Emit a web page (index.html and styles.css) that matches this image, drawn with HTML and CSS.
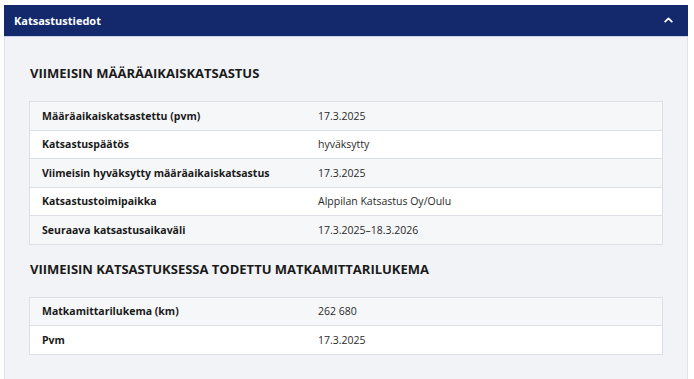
FILE: index.html
```html
<!DOCTYPE html>
<html lang="fi">
<head>
<meta charset="utf-8">
<title>Katsastustiedot</title>
<link rel="stylesheet" href="styles.css">
</head>
<body>
<section class="panel">
  <header class="panel-header">
    <h2 class="panel-title">Katsastustiedot</h2>
    <svg class="chevron" width="9" height="6" viewBox="0 0 9 6" aria-hidden="true"><path d="M1.2 4.6 L4.5 1.4 L7.8 4.6" fill="none" stroke="#ffffff" stroke-width="1.8" stroke-linecap="round" stroke-linejoin="round"/></svg>
  </header>
  <div class="panel-body">
    <h3 class="section-title">VIIMEISIN MÄÄRÄAIKAISKATSASTUS</h3>
    <div class="info-table">
      <div class="row odd"><div class="label">Määräaikaiskatsastettu (pvm)</div><div class="value">17.3.2025</div></div>
      <div class="row"><div class="label">Katsastuspäätös</div><div class="value">hyväksytty</div></div>
      <div class="row odd"><div class="label">Viimeisin hyväksytty määräaikaiskatsastus</div><div class="value">17.3.2025</div></div>
      <div class="row"><div class="label">Katsastustoimipaikka</div><div class="value">Alppilan Katsastus Oy/Oulu</div></div>
      <div class="row odd"><div class="label">Seuraava katsastusaikaväli</div><div class="value">17.3.2025–18.3.2026</div></div>
    </div>
    <h3 class="section-title">VIIMEISIN KATSASTUKSESSA TODETTU MATKAMITTARILUKEMA</h3>
    <div class="info-table">
      <div class="row odd"><div class="label">Matkamittarilukema (km)</div><div class="value">262 680</div></div>
      <div class="row"><div class="label">Pvm</div><div class="value">17.3.2025</div></div>
    </div>
  </div>
</section>
</body>
</html>
```
FILE: styles.css
```css
html, body {
  margin: 0;
  padding: 0;
  background: #ffffff;
}
body {
  font-family: "Open Sans", "Liberation Sans", sans-serif;
  color: #1f1f1f;
  height: 100vh;
  display: flex;
  flex-direction: column;
  overflow: hidden;
}
.panel {
  flex: 1;
  margin: 5px 6px 0 4px;
  display: flex;
  flex-direction: column;
  min-height: 0;
}
.panel-header {
  background: #13296b;
  height: 31px;
  flex: none;
  border-bottom: 1px solid #c9d3ea;
  display: flex;
  align-items: center;
  justify-content: space-between;
  padding: 0 15px 0 10px;
}
.panel-title {
  margin: 0;
  color: #ffffff;
  font-family: "Open Sans", sans-serif;
  font-weight: 700;
  font-size: 11px;
}
.chevron {
  display: block;
  margin-top: -2px;
}
.panel-body {
  flex: 1;
  min-height: 0;
  background: #f2f3f6;
  border-left: 1px solid #dfe2e8;
  border-right: 1px solid #dfe2e8;
  padding: 28px 24px 0 24px;
}
.section-title {
  margin: 0 0 20px 1px;
  font-family: "Open Sans", sans-serif;
  font-weight: 700;
  font-size: 13px;
  line-height: 16px;
  color: #1a1a1a;
}
.info-table {
  border: 1px solid #dcdfe5;
  margin-bottom: 16px;
}
.row {
  display: grid;
  grid-template-columns: 276px 1fr;
  height: 28.5px;
  align-items: center;
  background: #ffffff;
  border-top: 1px solid #dcdfe5;
  box-sizing: border-box;
}
.row:first-child {
  border-top: none;
  height: 27.5px;
}
.row.odd {
  background: #f6f7f9;
}
.label {
  padding-left: 12px;
  font-weight: 700;
  font-size: 10.5px;
  color: #1a1a1a;
}
.value {
  padding-left: 12px;
  font-size: 10.5px;
  color: #2a2a2a;
}
```
